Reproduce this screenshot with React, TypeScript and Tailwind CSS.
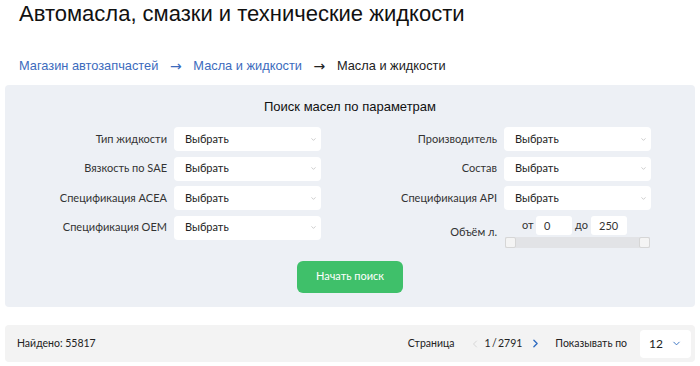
import { ChevronDown, ChevronLeft, ChevronRight } from "lucide-react";

const left = ["Тип жидкости", "Вязкость по SAE", "Спецификация ACEA", "Спецификация OEM"];
const right = ["Производитель", "Состав", "Спецификация API"];

function Select() {
  return (
    <div className="flex items-center justify-between w-[147px] h-[24px] bg-white rounded-[4px] pl-[11px] pr-[4px] text-[11px] text-[#222]">
      <span>Выбрать</span>
      <ChevronDown size={7} strokeWidth={2} className="text-[#aaa]" />
    </div>
  );
}

function Row({ label }: { label: string }) {
  return (
    <div className="flex items-center h-[24px] gap-[7px]">
      <span className="w-[130px] text-right text-[11px] text-[#333] whitespace-nowrap">{label}</span>
      <Select />
    </div>
  );
}

export default function App() {
  return (
    <div className="w-[700px] h-[366px] bg-white font-['Lato',sans-serif] overflow-hidden">
      <h1 className="px-[19px] pt-[1px] h-[30px] font-['Liberation_Sans',sans-serif] text-[22px] leading-[26px] text-[#111]">
        Автомасла, смазки и технические жидкости
      </h1>
      <nav className="flex items-center px-[19px] mt-[27px] h-[18px] font-['Liberation_Sans',sans-serif] text-[12.8px]">
        <span className="text-[#3c6bbd]">Магазин автозапчастей</span>
        <span className="mx-[10px] w-[15px] text-center text-[#3c6bbd] font-['DejaVu_Sans',sans-serif] text-[14px]">→</span>
        <span className="text-[#3c6bbd]">Масла и жидкости</span>
        <span className="mx-[10px] w-[15px] text-center text-[#222] font-['DejaVu_Sans',sans-serif] text-[14px]">→</span>
        <span className="text-[#222]">Масла и жидкости</span>
      </nav>

      <section className="mx-[5px] mt-[10px] h-[222px] bg-[#edf0f5] rounded-[4px] pt-[13px]">
        <h2 className="text-center font-['Liberation_Sans',sans-serif] text-[13px] leading-[18px] text-[#111]">
          Поиск масел по параметрам
        </h2>
        <div className="flex mt-[11px]">
          <div className="flex flex-col gap-[5.5px] ml-[32px]">
            {left.map((l) => (
              <Row key={l} label={l} />
            ))}
          </div>
          <div className="flex flex-col gap-[5.5px] ml-[46px]">
            {right.map((l) => (
              <Row key={l} label={l} />
            ))}
            <div className="flex gap-[7px]">
              <span className="w-[130px] text-right text-[11px] text-[#333] pt-[8px]">Объём л.</span>
              <div className="w-[147px] flex flex-col">
                <div className="flex items-center h-[19px] text-[11px] text-[#333]">
                  <span className="ml-[18px] w-[14px]">от</span>
                  <div className="w-[36px] h-[19px] bg-white rounded-[3px] pl-[8px] leading-[19px]">0</div>
                  <span className="ml-[3px] w-[16px]">до</span>
                  <div className="w-[36px] h-[19px] bg-white rounded-[3px] pl-[8px] leading-[19px]">250</div>
                </div>
                <div className="relative mt-[2px] ml-[1px] w-[145px] h-[11px] bg-[#e2e3e6]">
                  <div className="absolute left-0 top-0 w-[11px] h-[11px] bg-[#f4f4f4] border border-[#d6d6d6] rounded-[2px]" />
                  <div className="absolute right-0 top-0 w-[11px] h-[11px] bg-[#f4f4f4] border border-[#d6d6d6] rounded-[2px]" />
                </div>
              </div>
            </div>
          </div>
        </div>
        <div className="flex justify-center mt-[13px]">
          <button className="w-[106px] h-[32px] rounded-[6px] bg-[#3fc06a] text-white text-[11px]">
            Начать поиск
          </button>
        </div>
      </section>

      <footer className="mx-[5px] mt-[18px] h-[37px] bg-[#f3f3f3] rounded-[4px] flex items-center pl-[12px] pr-[4px] text-[10.5px] text-[#222]">
        <span>Найдено: 55817</span>
        <span className="ml-auto">Страница</span>
        <ChevronLeft size={12} strokeWidth={1.5} className="ml-[14px] text-[#ccc]" />
        <span className="ml-[4px]">1&#8201;/&#8201;2791</span>
        <ChevronRight size={13} strokeWidth={2.5} className="ml-[7px] text-[#2f6cc0]" />
        <span className="ml-[13px]">Показывать по</span>
        <div className="ml-[13px] w-[51px] h-[28px] bg-white rounded-[4px] flex items-center justify-between pl-[9px] pr-[9px] text-[12px]">
          <span>12</span>
          <ChevronDown size={11} strokeWidth={2} className="text-[#2f6cc0]" />
        </div>
      </footer>
    </div>
  );
}
